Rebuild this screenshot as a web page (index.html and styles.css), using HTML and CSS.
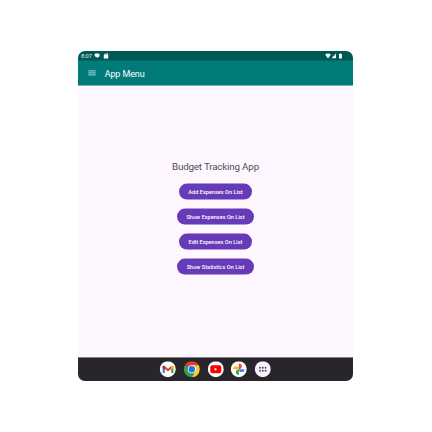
FILE: index.html
```html
<!DOCTYPE html>
<html lang="en">
<head>
<meta charset="utf-8">
<title>App Menu</title>
<link rel="stylesheet" href="styles.css">
</head>
<body>
<div class="tablet">
  <div class="status">
    <span class="time">8:07</span>
    <svg class="chat" viewBox="0 0 6 6"><path d="M1.600 .6h2.800q1.100 0 1.100 1v1.300q0 1-1.100 1h-.2L3.200 5.300 2.600 4H1.800L.6 2.800V1.600q0-1 1-1z" fill="#fff"/></svg>
    <svg class="card" viewBox="0 0 6 6"><path d="M2.200 .5h3v5H.8V2z" fill="#fff"/><path d="M2.300 1.500h2.200" stroke="#6f9e9c" stroke-width=".8"/></svg>
    <svg class="signals" viewBox="0 0 19 6"><path d="M.2 1.800Q3 -.8 5.800 1.800L3 5.500zM6.500 5.300L11 .6V5.300zM14 1h.7V.4h1.500V1h.7v4.600H14z" fill="#fff"/></svg>
  </div>
  <header class="bar">
    <svg class="menu" viewBox="0 0 8 6"><path d="M.3 .9h7.400M.3 2.900h7.400M.3 4.900h7.400" stroke="#d9ecec" stroke-width=".8"/></svg>
    <h1>App Menu</h1>
  </header>
  <main>
    <h2>Budget Tracking App</h2>
    <button class="b1">Add Expenses On List</button>
    <button class="b2">Show Expenses On List</button>
    <button class="b3">Edit Expenses On List</button>
    <button class="b4">Show Statistics On List</button>
  </main>
  <nav class="dock">
    <svg viewBox="0 0 16 16"><circle cx="8" cy="8" r="8" fill="#fff"/><path d="M2.800 5v6.700h2.300V6.200z" fill="#4285f4"/><path d="M13.700 5v6.700h-2.300V6.200z" fill="#34a853"/><path d="M3.900 5.500L8.200 8.900L12.500 5.500" fill="none" stroke="#ea4335" stroke-width="2.200"/><path d="M11.400 5.300l1-.8q1.300-.3 1.300 1v1.400l-2.300 1.700z" fill="#fbbc04"/><path d="M2.800 5.500q0-1.300 1.300-1l1 .8v3.200L2.800 6.800z" fill="#c5221f"/></svg>
    <svg viewBox="0 0 16 16"><path d="M8 8L1.070 4A8 8 0 0 1 14.930 4z" fill="#e33b2e"/><path d="M8 8L1.070 4A8 8 0 0 0 8 16L11.460 10z" fill="#2da24c"/><path d="M8 4H14.930A8 8 0 0 1 8 16L11.460 10z" fill="#fcc934"/><circle cx="8" cy="8" r="4" fill="#fff"/><circle cx="8" cy="8" r="3.200" fill="#1a73e8"/></svg>
    <svg viewBox="0 0 16 16"><circle cx="8" cy="8" r="8" fill="#fff"/><rect x="2.500" y="4" width="11" height="8" rx="2" fill="#f00"/><path d="M6.800 6.500v3L9.400 8z" fill="#fff"/></svg>
    <svg viewBox="0 0 16 16"><circle cx="8" cy="8" r="8" fill="#fff"/><path d="M8 8V2.300A2.850 2.850 0 0 1 8 8z" fill="#ea4335"/><path d="M8 8H13.700A2.850 2.850 0 0 1 8 8z" fill="#4285f4"/><path d="M8 8V13.700A2.850 2.850 0 0 1 8 8z" fill="#34a853"/><path d="M8 8H2.300A2.850 2.850 0 0 1 8 8z" fill="#fbbc04"/></svg>
    <svg viewBox="0 0 16 16"><circle cx="8" cy="8" r="8" fill="#f7f2fb"/><g fill="#4b4668"><circle cx="5.200" cy="6.500" r=".95"/><circle cx="8" cy="6.500" r=".95"/><circle cx="10.800" cy="6.500" r=".95"/><circle cx="5.200" cy="9.500" r=".95"/><circle cx="8" cy="9.500" r=".95"/><circle cx="10.800" cy="9.500" r=".95"/></g></svg>
  </nav>
</div>
</body>
</html>
```

FILE: styles.css
```css
* { box-sizing: border-box; }
body {
  margin: 0;
  padding: 51px 79px 0 78px;
  background: #fff;
  font-family: Roboto, "Liberation Sans", sans-serif;
}
.tablet {
  width: 275px;
  height: 330px;
  display: flex;
  flex-direction: column;
  border-radius: 7px;
  overflow: hidden;
  background: #fef7ff;
}
.status {
  height: 9px;
  flex: none;
  display: flex;
  align-items: center;
  padding: 0 9px 0 3px;
  background: #005957;
}
.time { width: 13px; font-size: 5.700px; line-height: 9px; color: #e5f0f0; white-space: nowrap; transform: translateY(1px); }
.chat, .card { width: 6px; height: 6px; }
.card { margin-left: 3px; }
.signals { width: 19px; height: 6px; margin-left: auto; }
.bar {
  height: 26px;
  flex: none;
  display: flex;
  align-items: center;
  padding: 0 10px;
  border-top: 1px solid #006c6a;
  border-bottom: 1px solid #72b5b7;
  background: #007b79;
  color: #fff;
}
.menu { width: 8px; height: 6px; }
.bar h1 { margin: 0 0 0 8.700px; font-size: 9px; letter-spacing: -.12px; font-weight: 400; line-height: 12px; transform: translateY(1px); }
main {
  flex: 1;
  display: flex;
  flex-direction: column;
  align-items: center;
  padding-top: 75px;
}
main h2 { margin: 0 0 11px; font-size: 9.800px; letter-spacing: -.18px; line-height: 12px; font-weight: 400; color: #514c54; white-space: nowrap; }
button {
  height: 16px;
  flex: none;
  margin: 0 0 9.100px;
  padding: 0;
  border: 0;
  border-radius: 8px;
  background: #673ab7;
  color: #fff;
  font: 500 5.600px/16px Roboto, "Liberation Sans", sans-serif;
  white-space: nowrap;
  transform: translateY(-.4px);
}
.b1 { width: 73.500px; }
.b2 { width: 77px; }
.b3 { width: 73px; }
.b4 { width: 76.500px; }
.dock {
  height: 24px;
  flex: none;
  display: flex;
  align-items: center;
  justify-content: center;
  gap: 7.600px;
  border-top: 1px solid #858087;
  background: #28262b;
}
.dock svg { width: 16px; height: 16px; transform: translate(-.2px, -.8px); }
```
